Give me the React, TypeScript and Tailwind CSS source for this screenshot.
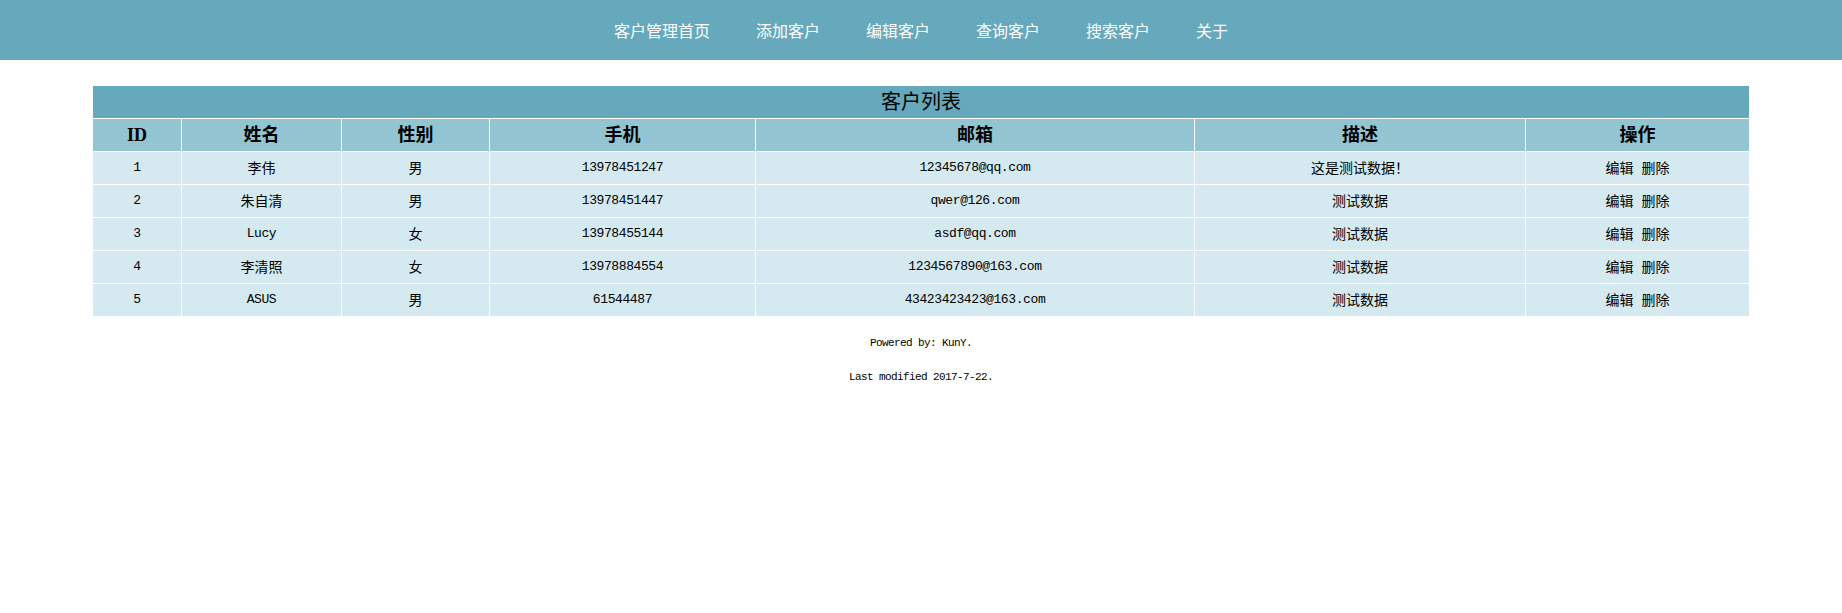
import React from 'react';

const navItems = ['客户管理首页', '添加客户', '编辑客户', '查询客户', '搜索客户', '关于'];

const columns = [
  { label: 'ID', w: 'w-[89px]' },
  { label: '姓名', w: 'w-[160px]' },
  { label: '性别', w: 'w-[148px]' },
  { label: '手机', w: 'w-[266px]' },
  { label: '邮箱', w: 'w-[439px]' },
  { label: '描述', w: 'w-[331px]' },
  { label: '操作', w: 'w-[224px]' },
];

const customers = [
  { id: '1', name: '李伟', gender: '男', phone: '13978451247', email: '12345678@qq.com', desc: '这是测试数据！' },
  { id: '2', name: '朱自清', gender: '男', phone: '13978451447', email: 'qwer@126.com', desc: '测试数据' },
  { id: '3', name: 'Lucy', gender: '女', phone: '13978455144', email: 'asdf@qq.com', desc: '测试数据' },
  { id: '4', name: '李清照', gender: '女', phone: '13978884554', email: '1234567890@163.com', desc: '测试数据' },
  { id: '5', name: 'ASUS', gender: '男', phone: '61544487', email: '43423423423@163.com', desc: '测试数据' },
];

const mono = "font-['Liberation_Mono','Noto_Sans_CJK_SC',monospace] text-[13px] tracking-[-0.4px]";
const cjk = "font-['Noto_Sans_CJK_SC',sans-serif] text-[14px] pb-[3px]";
const isAscii = (s: string) => /^[\x00-\x7f]+$/.test(s);

function Cell({ text }: { text: string }) {
  return (
    <td className={`h-[33px] border border-white p-0 text-center align-middle leading-[16px] text-black ${isAscii(text) ? mono : cjk}`}>
      {text}
    </td>
  );
}

export default function App() {
  return (
    <div className="min-h-[613px] bg-white">
      {/* top navigation */}
      <nav className="flex h-[60px] items-center justify-center gap-[46px] bg-[#66a8bc] pb-[1px]">
        {navItems.map((item) => (
          <a key={item} className="font-['Noto_Sans_CJK_SC',sans-serif] text-[16px] leading-none text-white">
            {item}
          </a>
        ))}
      </nav>

      <table className="mx-auto mt-[25px] w-[90%] table-fixed border-collapse">
        <colgroup>
          {columns.map((c) => (
            <col key={c.label} className={c.w} />
          ))}
        </colgroup>
        <thead>
          <tr>
            <th
              colSpan={7}
              className="h-[33px] border border-white bg-[#66a8bc] p-0 pb-[3px] font-['Noto_Sans_CJK_SC',serif] text-[20px] font-normal leading-none text-black"
            >
              客户列表
            </th>
          </tr>
          <tr className="bg-[#93c4d2]">
            {columns.map((c) => (
              <th
                key={c.label}
                className="h-[33px] border border-white p-0 font-['Liberation_Serif','Noto_Sans_CJK_SC',serif] text-[18px] font-bold leading-none text-black"
              >
                {c.label}
              </th>
            ))}
          </tr>
        </thead>
        <tbody>
          {customers.map((c) => (
            <tr key={c.id} className="bg-[#d4e9f0]">
              <Cell text={c.id} />
              <Cell text={c.name} />
              <Cell text={c.gender} />
              <Cell text={c.phone} />
              <Cell text={c.email} />
              <Cell text={c.desc} />
              <td className={`h-[33px] border border-white p-0 text-center align-middle leading-[16px] text-black ${cjk}`}>
                <a>编辑</a> <a className="ml-[5px]">删除</a>
              </td>
            </tr>
          ))}
        </tbody>
      </table>

      {/* footer */}
      <div className="mt-[19px] text-center font-['Liberation_Mono',monospace] text-[11px] tracking-[-0.6px] text-black">
        <p className="leading-[14px]">Powered by: KunY.</p>
        <p className="mt-[20px] leading-[14px]">Last modified 2017-7-22.</p>
      </div>
    </div>
  );
}
